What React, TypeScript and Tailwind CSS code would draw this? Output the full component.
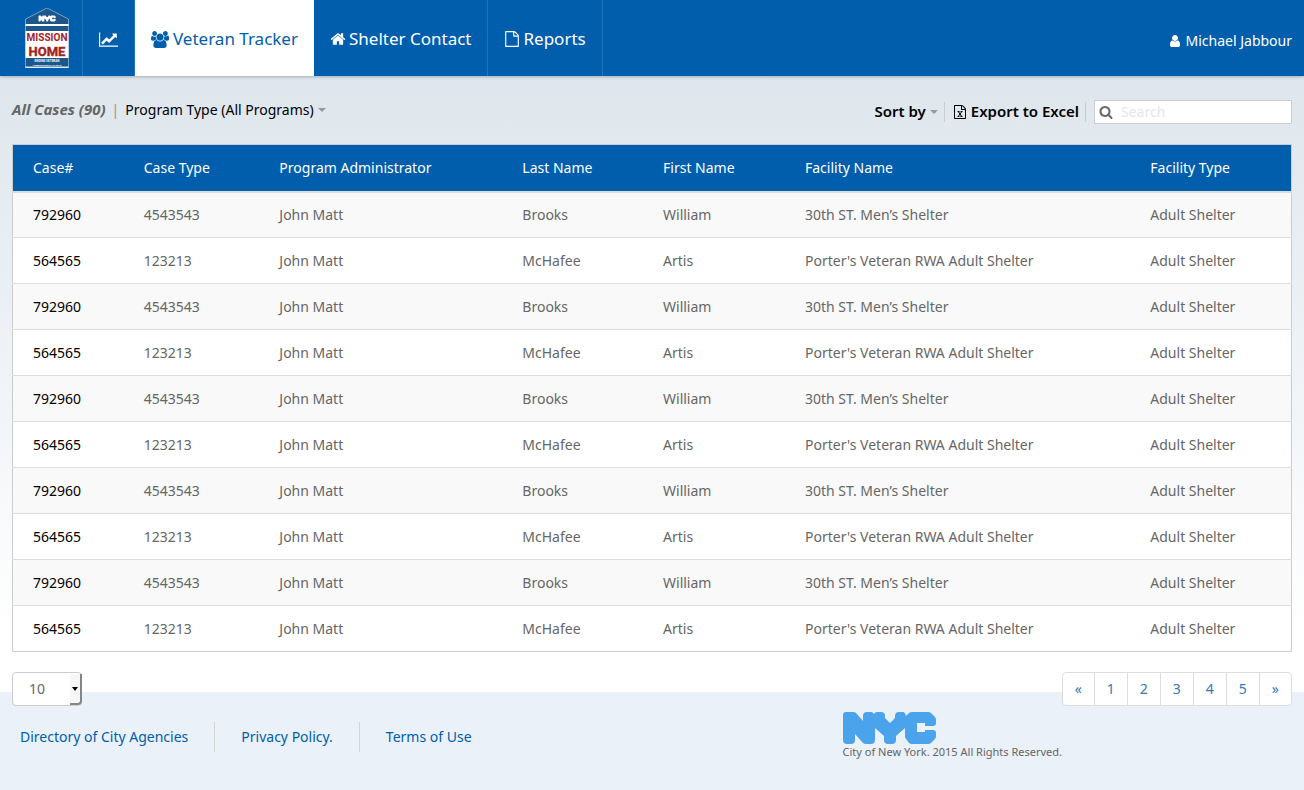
import React from "react";

const icons = {
  chart: "M2048 1536v128h-2048v-1536h128v1408h1920zm-128-1248v435q0 21-19.5 29.5t-35.5-7.5l-121-121-633 633q-10 10-23 10t-23-10l-233-233-416 416-192-192 585-585q10-10 23-10t23 10l233 233 464-464-121-121q-16-16-7.5-35.5t29.5-19.5h435q14 0 23 9t9 23z",
  users: "M593 896q-162 5-265 128h-134q-82 0-138-40.5t-56-118.5q0-353 124-353 6 0 43.5 21t97.5 42.5 119 21.5q67 0 133-23-5 37-5 66 0 159 93 293zm1071 637q0 120-73 189.5t-194 69.5h-874q-121 0-194-69.5t-73-189.5q0-53 3.5-103.5t14-109 26.5-108.5 43-97.5 62-81 85.5-53.5 111.5-20q10 0 43 21.5t73 48 107 48 135 21.5 135-21.5 107-48 73-48 43-21.5q61 0 111.5 20t85.5 53.5 62 81 43 97.5 26.5 108.5 14 109 3.5 103.5zm-1024-1277q0 106-75 181t-181 75-181-75-75-181 75-181 181-75 181 75 75 181zm704 384q0 159-112.5 271.5t-271.5 112.5-271.5-112.5-112.5-271.5 112.5-271.5 271.5-112.5 271.5 112.5 112.5 271.5zm576 225q0 78-56 118.5t-138 40.5h-134q-103-123-265-128 93-134 93-293 0-29-5-66 66 23 133 23 59 0 119-21.5t97.5-42.5 43.5-21q124 0 124 353zm-128-609q0 106-75 181t-181 75-181-75-75-181 75-181 181-75 181 75 75 181z",
  home: "M1472 992v480q0 26-19 45t-45 19h-384v-384h-256v384h-384q-26 0-45-19t-19-45v-480q0-1 .5-3t.5-3l575-474 575 474q1 2 1 6zm223-69l-62 74q-8 9-21 11h-3q-13 0-21-7l-692-577-692 577q-12 8-24 7-13-2-21-11l-62-74q-8-10-7-23.5t11-21.5l719-599q32-26 76-26t76 26l244 204v-195q0-14 9-23t23-9h192q14 0 23 9t9 23v408l219 182q10 8 11 21.5t-7 23.5z",
  file: "M1596 380q28 28 48 76t20 88v1152q0 40-28 68t-68 28h-1344q-40 0-68-28t-28-68v-1600q0-40 28-68t68-28h896q40 0 88 20t76 48zm-444-244v376h376q-10-29-22-41l-313-313q-12-12-41-22zm384 1528v-1024h-416q-40 0-68-28t-28-68v-416h-768v1536h1280z",
  excel: "M1596 380q28 28 48 76t20 88v1152q0 40-28 68t-68 28h-1344q-40 0-68-28t-28-68v-1600q0-40 28-68t68-28h896q40 0 88 20t76 48zm-444-244v376h376q-10-29-22-41l-313-313q-12-12-41-22zm384 1528v-1024h-416q-40 0-68-28t-28-68v-416h-768v1536h1280zm-979-234v106h281v-106h-75l103-161q5-7 10-16.5t7.5-13.5 3.5-4h2q1 4 5 10 2 4 4.5 7.5t6 8 6.5 8.5l107 161h-76v106h291v-106h-68l-192-273 195-282h67v-107h-279v107h74l-103 159q-4 7-10 16.5t-9 13.5l-2 3h-2q-1-4-5-10-6-11-17-23l-106-159h76v-107h-290v107h68l189 272-194 283h-68z",
  user: "M1536 1399q0 109-62.5 187t-150.5 78h-854q-88 0-150.5-78t-62.5-187q0-85 8.5-160.5t31.5-152 58.5-131 94-89 134.5-34.5q131 128 313 128t313-128q76 0 134.5 34.5t94 89 58.5 131 31.5 152 8.5 160.5zm-256-887q0 159-112.5 271.5t-271.5 112.5-271.5-112.5-112.5-271.5 112.5-271.5 271.5-112.5 271.5 112.5 112.5 271.5z",
  search: "M1216 832q0-185-131.5-316.5t-316.5-131.5-316.5 131.5-131.5 316.5 131.5 316.5 316.5 131.5 316.5-131.5 131.5-316.5zm512 832q0 52-38 90t-90 38q-54 0-90-38l-343-342q-179 124-399 124-143 0-273.5-55.5t-225-150-150-225-55.5-273.5 55.5-273.5 150-225 225-150 273.5-55.5 273.5 55.5 225 150 150 225 55.5 273.5q0 220-124 399l343 343q37 37 37 90z",
};

function Icon({ name, box = "0 0 1792 1792", className }: { name: keyof typeof icons; box?: string; className: string }) {
  return (
    <svg viewBox={box} className={`shrink-0 fill-current ${className}`} aria-hidden="true">
      <path d={icons[name]} />
    </svg>
  );
}

const nycShape =
  "M3 0H10Q12 0 13 1L20 9V4Q20 0 24 0H28Q30 0 31 2Q32 0 34 0H38Q42 0 42 4V6L47 11L52 6V4Q52 0 56 0H60Q62 0 63 4L66 1Q67 0 69 0H85Q87 0 88 1L92 5Q93 6 93 8V11Q93 14 90 14H82V11H74V20H82V18H90Q93 18 93 21V24Q93 26 92 27L88 31Q87 32 85 32H69Q67 32 66 31L63 27Q62 26 62 24V16L53 24V28Q53 32 49 32H45Q41 32 41 28V24L32 16V28Q32 32 28 32H23Q21 32 20 31L12 22V28Q12 32 8 32H4Q0 32 0 28V3Q0 0 3 0Z";

function HomeLogo() {
  return (
    <svg viewBox="0 0 44 60" className="h-15 w-11" role="img" aria-label="NYC Mission Home">
      <path d="M22 0L43.500 11V60H.5V11Z" fill="#1c568c" stroke="#8fb4d6" strokeWidth=".8" />
      <rect x=".5" y="16" width="43" height="2" fill="#fff" />
      <rect x=".5" y="23" width="43" height="27" fill="#fff" />
      <rect x=".5" y="58.500" width="43" height="1.500" fill="#dce8f2" />
      <g transform="translate(13.500 7.500) scale(.185)" fill="#fff">
        <path d={nycShape} />
      </g>
      <g fontFamily="Roboto, sans-serif" fontWeight="700" textAnchor="middle">
        <text x="22" y="33" fontSize="10" fill="#a3241f">MISSION</text>
        <text x="22" y="48" fontSize="13" fill="#a3241f" stroke="#a3241f" strokeWidth=".4">HOME</text>
        <text x="22" y="54" fontSize="3" fill="#fff">ENDING VETERAN</text>
        <text x="22" y="57.500" fontSize="2.500" fill="#fff">HOMELESSNESS IN 2015</text>
      </g>
    </svg>
  );
}

const headers = ["Case#", "Case Type", "Program Administrator", "Last Name", "First Name", "Facility Name", "Facility Type"];
const brooks = ["792960", "4543543", "John Matt", "Brooks", "William", "30th ST. Men’s Shelter", "Adult Shelter"];
const mcHafee = ["564565", "123213", "John Matt", "McHafee", "Artis", "Porter's Veteran RWA Adult Shelter", "Adult Shelter"];
const rows = Array.from({ length: 10 }, (_, i) => (i % 2 ? mcHafee : brooks));
const widths = ["w-[8.700%]", "w-[10.600%]", "w-[19%]", "w-[11%]", "w-[11.100%]", "w-[27%]", "w-[12.600%]"];
const pages = ["«", "1", "2", "3", "4", "5", "»"];

const tab = "flex items-center gap-[3px] border-r border-[#1c74bd] px-4";

export default function App() {
  return (
    <div className="flex min-h-screen flex-col bg-[#eaf1f8] font-['Noto_Sans',sans-serif] text-sm text-[#666]">
      <header className="relative flex h-19 items-stretch bg-[#005eac] text-white shadow-[0_1px_3px_rgba(0,0,0,0.25)]">
        <a href="#" className="flex items-center border-r border-[#1c74bd] pr-[13px] pl-[25px]">
          <HomeLogo />
        </a>
        <nav className="flex pt-0.5 text-[17px] *:-mt-0.5 *:pt-0.5">
          <a href="#" aria-label="Dashboard" className={tab}><Icon name="chart" box="0 0 2048 1792" className="h-[17px] w-[19px]" /></a>
          <a href="#" aria-current="page" className="flex items-center gap-1 bg-white px-4 text-[#005eac]"><Icon name="users" box="0 0 1920 1792" className="h-[17px] w-[18px]" />Veteran Tracker</a>
          <a href="#" className={tab}><Icon name="home" className="size-4" />Shelter Contact</a>
          <a href="#" className={tab}><Icon name="file" className="size-4" />Reports</a>
        </nav>
        <a href="#" className="ml-auto flex items-center gap-1 pt-1.5 pr-3"><Icon name="user" className="size-3.5" />Michael Jabbour</a>
      </header>

      <main className="bg-linear-to-b from-[#dee6ed] to-white to-90% px-3 pt-6">
        <div className="mb-5 flex h-6 items-center">
          <div className="flex items-center pb-1">
            <h1 className="text-[15px] font-bold italic">All Cases (90)</h1>
            <span className="mx-1.5 text-[#b58a6a]">|</span>
            <button type="button" className="flex items-center gap-1 text-black">
              Program Type (All Programs)
              <span className="border-x-4 border-t-4 border-x-transparent border-t-[#999]" />
            </button>
          </div>
          <div className="ml-auto flex items-center text-[15px] font-semibold text-black">
            <button type="button" className="flex h-5 items-center gap-1 border-r border-[#ccc] pr-1.5">
              Sort by
              <span className="border-x-4 border-t-4 border-x-transparent border-t-[#999]" />
            </button>
            <button type="button" className="mr-2 flex h-5 items-center gap-1 border-r border-[#ccc] pr-1.5 pl-2"><Icon name="excel" className="size-3.5" />Export to Excel</button>
            <label className="flex h-6 w-[198px] items-center border border-[#ccc] bg-white pl-1 text-sm font-normal text-[#666]">
              <Icon name="search" className="size-3.5" />
              <input type="search" aria-label="Search" placeholder="Search" className="min-w-0 flex-1 pl-2 outline-none placeholder:text-[#e6e6e6]" />
            </label>
          </div>
        </div>

        <table className="w-full table-fixed border-collapse border border-[#ccc] bg-white text-left">
          <thead className="bg-[#005eac] text-white">
            <tr className="h-[47px] border-b-2 border-[#ddd]">
              {headers.map((h, i) => <th key={h} scope="col" className={`pl-5 font-normal ${widths[i]}`}>{h}</th>)}
            </tr>
          </thead>
          <tbody>
            {rows.map((row, r) => (
              <tr key={r} className="h-[46px] border-t border-[#ddd] odd:bg-[#f9f9f9]">
                {row.map((cell, c) => (
                  <td key={c} className="pl-5 whitespace-nowrap">
                    {c === 0 ? <a href="#" className="text-black">{cell}</a> : cell}
                  </td>
                ))}
              </tr>
            ))}
          </tbody>
        </table>

        <div className="mt-5 -mb-3.5 flex items-start justify-between">
          <span className="relative">
            <select aria-label="Rows per page" className="block h-[34px] w-[70px] appearance-none rounded border border-[#ccc] bg-white pl-4">
              <option>10</option>
              <option>25</option>
              <option>50</option>
            </select>
            <span className="pointer-events-none absolute top-0.5 right-0 flex h-[31px] w-3 items-center justify-center rounded-br border-r-2 border-b-2 border-[#858585] bg-[#f7f7f7]">
              <span className="border-x-3 border-t-4 border-x-transparent border-t-black" />
            </span>
          </span>
          <nav aria-label="Pagination" className="flex divide-x divide-[#ddd] overflow-hidden rounded border border-[#ddd] bg-white text-[#337ab7]">
            {pages.map((p) => <a key={p} href="#" className="flex h-8 items-center justify-center px-3">{p}</a>)}
          </nav>
        </div>
      </main>

      <footer className="flex items-start pt-5 pl-5">
        <nav className="mt-2.5 flex h-[30px] items-center divide-x divide-[#d5d5d5] leading-[30px] text-[#005eac]">
          <a href="#" className="pr-6.5">Directory of City Agencies</a>
          <a href="#" className="px-6.5">Privacy Policy.</a>
          <a href="#" className="pl-6.5">Terms of Use</a>
        </nav>
        <div className="mr-[242px] ml-auto text-[11px] leading-4">
          <svg viewBox="0 0 93 32" className="h-8 w-[93px] fill-[#4ba3eb]" role="img" aria-label="NYC"><path d={nycShape} /></svg>
          <p>City of New York. 2015 All Rights Reserved.</p>
        </div>
      </footer>
    </div>
  );
}
